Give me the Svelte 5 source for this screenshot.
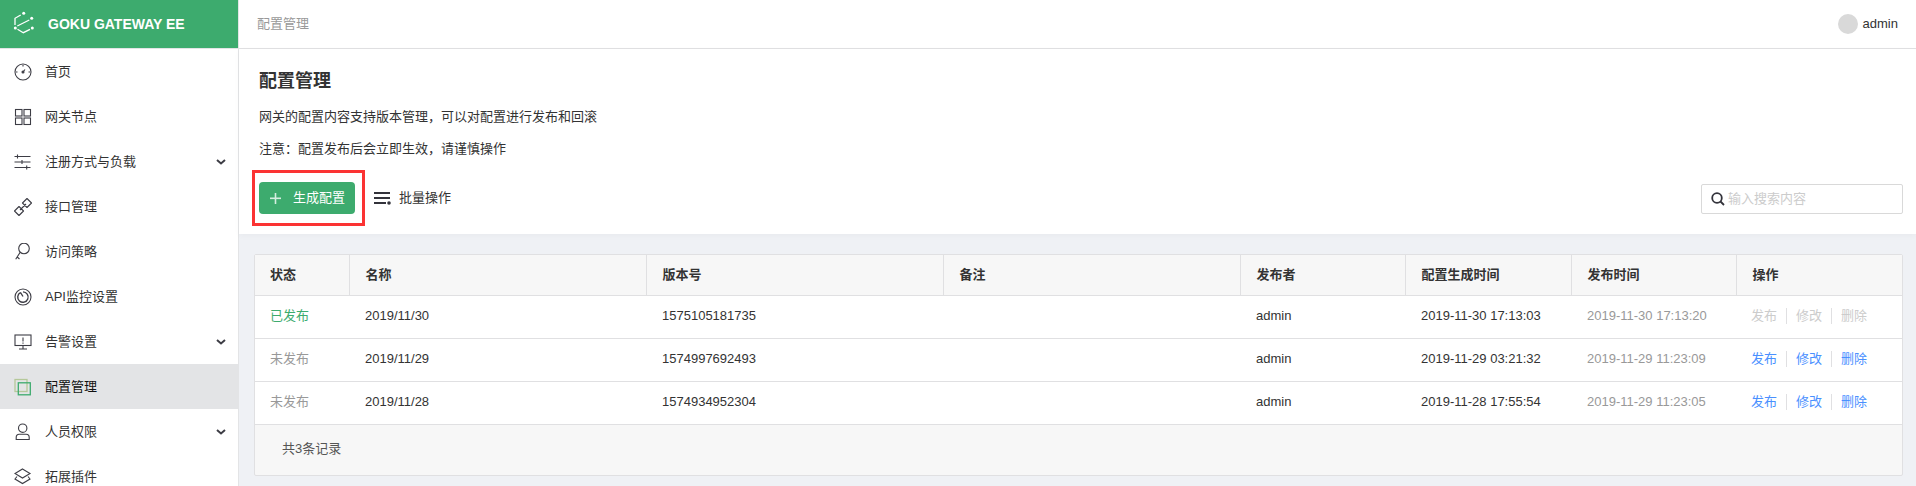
<script>
  const nav = [
    { label: '首页', icon: 'gauge' },
    { label: '网关节点', icon: 'grid' },
    { label: '注册方式与负载', icon: 'sliders', arrow: true },
    { label: '接口管理', icon: 'link' },
    { label: '访问策略', icon: 'key' },
    { label: 'API监控设置', icon: 'monitor' },
    { label: '告警设置', icon: 'alert', arrow: true },
    { label: '配置管理', icon: 'copy', active: true },
    { label: '人员权限', icon: 'user', arrow: true },
    { label: '拓展插件', icon: 'layers' }
  ];
  const cols = [94, 297, 297, 297, 165, 166, 165, 166];
  const heads = ['状态', '名称', '版本号', '备注', '发布者', '配置生成时间', '发布时间', '操作'];
  const rows = [
    { status: '已发布', on: true, name: '2019/11/30', ver: '1575105181735', gen: '2019-11-30 17:13:03', pub: '2019-11-30 17:13:20' },
    { status: '未发布', name: '2019/11/29', ver: '1574997692493', gen: '2019-11-29 03:21:32', pub: '2019-11-29 11:23:09' },
    { status: '未发布', name: '2019/11/28', ver: '1574934952304', gen: '2019-11-28 17:55:54', pub: '2019-11-29 11:23:05' }
  ];
</script>

<div class="page">
  <aside class="side">
    <div class="brand">
      <svg class="logo" width="22" height="23" viewBox="0 0 22 23" fill="none" stroke="#fff" stroke-width="1.300">
        <path d="M7.700 4 2 7.300V14" />
        <path d="M4.300 15 16.300 9" />
        <path d="M4.500 18.300 10.300 21.700 17 18.300" />
        <circle cx="10.700" cy="2.300" r="1.500" fill="#fff" stroke="none" />
        <circle cx="18.700" cy="7.300" r="1.500" fill="#fff" stroke="none" />
        <circle cx="2.300" cy="17" r="1.500" fill="#fff" stroke="none" />
        <circle cx="19.300" cy="17" r="1.500" fill="#fff" stroke="none" />
      </svg>
      <span>GOKU GATEWAY EE</span>
    </div>
    <nav>
      {#each nav as item}
        <div class="item" class:active={item.active}>
          <svg class="ico" width="18" height="18" viewBox="0 0 18 18" fill="none" stroke="#3d3d45" stroke-width="1.100">
            {#if item.icon === 'gauge'}
              <circle cx="9" cy="9" r="8" /><path d="M9 2v1.500M2 9h1.500M14.500 9H16M8.500 9.500l2.500-3" /><circle cx="9" cy="9" r="1" fill="#3d3d45" />
            {:else if item.icon === 'grid'}
              <rect x="1.500" y="1.500" width="6.500" height="6.500" /><rect x="10" y="1.500" width="6.500" height="6.500" /><rect x="1.500" y="10" width="6.500" height="6.500" /><rect x="10" y="10" width="6.500" height="6.500" />
            {:else if item.icon === 'sliders'}
              <path d="M0.500 3.500h16M0.500 9h16M0.500 14.500h16M3.500 1.500v4M8 7v4M12.700 12.500v4" />
            {:else if item.icon === 'link'}
              <path stroke-linejoin="round" d="M0.500 13 5 8.500l4.500 4.500L5 17.500ZM8.500 5 13 0.500 17.500 5 13 9.500ZM6 12l6-6" />
            {:else if item.icon === 'key'}
              <circle cx="10" cy="5.500" r="5.300" /><path d="M6.200 9.200 1.700 16.300M3.200 14l2.300 2" />
            {:else if item.icon === 'monitor'}
              <circle cx="9" cy="9" r="8" /><path stroke-width="1.400" d="M6.500 4.500a5.200 5.200 0 1 0 2.500-.6M6.500 4.500l2.500 4" />
            {:else if item.icon === 'alert'}
              <rect x="1" y="2" width="16" height="10.500" /><path d="M9 12.500v3.500M5 16h8M9 4.500v4M9 9.500v1.200" />
            {:else if item.icon === 'copy'}
              <rect x="1" y="1.500" width="12" height="12" stroke="#b5c89a" stroke-width="1.300" /><rect x="4.300" y="4.800" width="12" height="12" stroke="#3dab6e" stroke-width="1.300" />
            {:else if item.icon === 'user'}
              <circle cx="8.700" cy="5.200" r="4.200" /><path d="M2.200 16.500V14.500c0-2 1.500-3.200 3-3.200h7c1.500 0 3 1.200 3 3.200v2Z" />
            {:else}
              <path d="M8.500 1 16 5.500 8.500 10 1 5.500ZM3 8.500 1 11 8.500 15.500 16 11 14 8.500" />
            {/if}
          </svg>
          <span class="label">{item.label}</span>
          {#if item.arrow}
            <svg class="arrow" width="10" height="6" viewBox="0 0 10 6" fill="none" stroke="#3d3d45" stroke-width="2"><path d="M1 1l4 3.500L9 1" /></svg>
          {/if}
        </div>
      {/each}
    </nav>
  </aside>

  <main class="main">
    <header class="top">
      <span class="crumb">配置管理</span>
      <span class="user"><i class="avatar"></i>admin</span>
    </header>

    <section class="panel">
      <h1>配置管理</h1>
      <p>网关的配置内容支持版本管理，可以对配置进行发布和回滚</p>
      <p class="note">注意：配置发布后会立即生效，请谨慎操作</p>
      <div class="tools">
        <div class="btn-wrap">
          <button class="btn">
            <svg class="plus" width="11" height="11" viewBox="0 0 11 11" fill="#d5eee0"><rect y="4.500" width="11" height="1.600" /><rect x="4.700" width="1.600" height="11" /></svg>
            生成配置
          </button>
          <div class="red"></div>
        </div>
        <div class="batch">
          <svg width="17" height="13" viewBox="0 0 17 13" fill="#33333b"><rect width="16" height="2" /><rect y="5" width="16" height="2" /><rect y="10" width="12" height="2" /><circle cx="15" cy="11" r="1.800" /></svg>
          批量操作
        </div>
        <div class="search">
          <svg width="14" height="14" viewBox="0 0 14 14" fill="none" stroke="#33333b" stroke-width="1.800"><circle cx="6" cy="6" r="4.800" /><path d="M9.500 9.500 13 13" /></svg>
          <span>输入搜索内容</span>
        </div>
      </div>
    </section>

    <section class="body">
      <div class="card">
        <table>
          <colgroup>
            {#each cols as w}<col style="width:{w}px" />{/each}
          </colgroup>
          <thead>
            <tr>{#each heads as h}<th>{h}</th>{/each}</tr>
          </thead>
          <tbody>
            {#each rows as r}
              <tr>
                <td class:green={r.on} class:grey={!r.on}>{r.status}</td>
                <td>{r.name}</td>
                <td>{r.ver}</td>
                <td></td>
                <td>admin</td>
                <td>{r.gen}</td>
                <td class="grey">{r.pub}</td>
                <td class="op-cell">
                  <div class="ops" class:off={r.on}>
                    <span>发布</span><span>修改</span><span>删除</span>
                  </div>
                </td>
              </tr>
            {/each}
          </tbody>
        </table>
        <div class="foot">共3条记录</div>
      </div>
    </section>
  </main>
</div>

<style>
  :global(body) { margin: 0; }
  .page {
    display: flex;
    width: 1916px;
    height: 486px;
    overflow: hidden;
    background: #eff1f5;
    color: #333;
    font: 13px/1.5 "Liberation Sans", "Noto Sans CJK SC", sans-serif;
  }
  .side {
    flex: none;
    width: 238px;
    background: #fff;
    border-right: 1px solid #e3e4e6;
  }
  .brand {
    display: flex;
    align-items: center;
    gap: 13px;
    height: 48px;
    padding-left: 13px;
    background: #3dab6e;
    border-bottom: 1px solid #e3e4e6;
    color: #fff;
    font-size: 14px;
    font-weight: 700;
  }
  .logo { flex: none; margin-bottom: 3px; }
  .item {
    display: flex;
    align-items: center;
    height: 45px;
    padding: 0 12px 0 14px;
    color: #333;
  }
  .item.active { background: #e3e4e6; color: #111; }
  .ico { flex: none; margin-right: 13px; }
  .label { flex: 1; }
  .arrow { flex: none; }
  .main { flex: 1; min-width: 0; }
  .top {
    display: flex;
    align-items: center;
    justify-content: space-between;
    height: 48px;
    padding: 0 18px 0 18px;
    background: #fff;
    border-bottom: 1px solid #e0e0e2;
  }
  .crumb { color: #999; }
  .user { display: flex; align-items: center; gap: 5px; }
  .avatar { width: 20px; height: 20px; border-radius: 50%; background: #d9d9d9; }
  .panel {
    height: 185px;
    padding: 0 13px 0 20px;
    box-sizing: border-box;
    background: #fff;
    box-shadow: 0 2px 6px rgba(0, 0, 0, 0.03);
  }
  h1 { margin: 0; padding-top: 20px; font-size: 18px; font-weight: 700; line-height: 24px; color: #333; }
  p { margin: 14px 0 0; line-height: 20px; }
  p.note { margin-top: 12px; }
  .tools {
    display: flex;
    align-items: center;
    margin-top: 23px;
    height: 32px;
  }
  .btn-wrap { position: relative; margin-right: 19px; }
  .btn {
    display: flex;
    align-items: center;
    width: 96px;
    height: 32px;
    padding: 0 0 0 11px;
    border: 0;
    border-radius: 4px;
    background: #3dab6e;
    color: #fff;
    font: inherit;
  }
  .plus { flex: none; margin-right: 12px; }
  .red {
    position: absolute;
    left: -7px;
    top: -12px;
    width: 113px;
    height: 56px;
    box-sizing: border-box;
    border: 3px solid #fb3333;
    pointer-events: none;
  }
  .batch { display: flex; align-items: center; gap: 8px; }
  .search {
    display: flex;
    align-items: center;
    gap: 3px;
    box-sizing: border-box;
    align-self: flex-end;
    width: 202px;
    height: 30px;
    margin-left: auto;
    padding-left: 9px;
    border: 1px solid #d9d9d9;
    border-radius: 2px;
    color: #ccc;
  }
  .body { padding: 20px 13px 0 15px; }
  .card {
    border: 1px solid #e0e0e2;
    border-radius: 2px;
    background: #f7f7f7;
  }
  table {
    width: 100%;
    table-layout: fixed;
    border-collapse: collapse;
    background: #fff;
  }
  th {
    height: 40px;
    padding: 0 15px 0 16px;
    text-align: left;
    font-weight: 700;
    background: #f7f7f7;
    border-bottom: 1px solid #e0e0e2;
    border-left: 1px solid #e0e0e2;
    box-sizing: border-box;
  }
  td {
    height: 43px;
    padding: 0 15px 1px 16px;
    border-bottom: 1px solid #e0e0e2;
    box-sizing: border-box;
  }
  th:first-child, td:first-child { padding-left: 15px; border-left: 0; }
  td.op-cell { padding-left: 15px; }
  .green { color: #3dab6e; }
  .grey { color: #999; }
  .ops { display: flex; color: #4a90ff; }
  .ops.off { color: #ccc; }
  .ops span { padding-right: 9px; margin-right: 9px; border-right: 1px solid #e0e0e2; line-height: 16px; }
  .ops span:last-child { border-right: 0; }
  .foot { height: 50px; padding-left: 27px; line-height: 48px; color: #555; }
</style>
